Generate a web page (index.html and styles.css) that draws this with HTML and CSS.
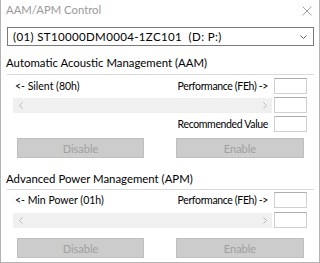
FILE: index.html
```html
<!DOCTYPE html>
<html lang="en">
<head>
    <meta charset="UTF-8">
    <meta name="viewport" content="width=device-width, initial-scale=1.0">
    <title>AAM/APM Control</title>
    <link rel="stylesheet" href="styles.css">
</head>
<body>
    <div class="window">
        <div class="titlebar">
            <span class="title">AAM/APM Control</span>
            <svg class="close" width="10" height="10" viewBox="0 0 10 10">
                <path d="M0.5 0.5 L9.5 9.5 M9.5 0.5 L0.5 9.5" stroke="#a0a0a0" stroke-width="1" fill="none"/>
            </svg>
        </div>

        <div class="combo">
            <span class="combo-text">(01) ST10000DM0004-1ZC101&nbsp;&nbsp;(D: P:)</span>
            <svg class="chevron" width="7" height="4" viewBox="0 0 7 4">
                <path d="M0.5 0.5 L3.5 3.5 L6.5 0.5" stroke="#606060" stroke-width="1" fill="none"/>
            </svg>
        </div>

        <!-- AAM -->
        <div class="group group-aam">
            <div class="group-title">Automatic Acoustic Management (AAM)</div>
            <div class="sep"></div>
            <div class="row">
                <span class="label-left">&lt;- Silent (80h)</span>
                <span class="label-right">Performance (FEh) -&gt;</span>
                <span class="field"></span>
            </div>
            <div class="row">
                <div class="scrollbar">
                    <svg width="4" height="7" viewBox="0 0 4 7"><path d="M3.5 0.5 L0.5 3.5 L3.5 6.5" stroke="#b8b8b8" fill="none"/></svg>
                    <svg width="4" height="7" viewBox="0 0 4 7"><path d="M0.5 0.5 L3.5 3.5 L0.5 6.5" stroke="#b8b8b8" fill="none"/></svg>
                </div>
                <span class="field"></span>
            </div>
            <div class="row">
                <span class="label-right">Recommended Value</span>
                <span class="field"></span>
            </div>
            <div class="buttons">
                <button class="btn" disabled>Disable</button>
                <button class="btn btn-wide" disabled>Enable</button>
            </div>
        </div>

        <!-- APM -->
        <div class="group group-apm">
            <div class="group-title">Advanced Power Management (APM)</div>
            <div class="sep"></div>
            <div class="row">
                <span class="label-left">&lt;- Min Power (01h)</span>
                <span class="label-right">Performance (FEh) -&gt;</span>
                <span class="field"></span>
            </div>
            <div class="row">
                <div class="scrollbar">
                    <svg width="4" height="7" viewBox="0 0 4 7"><path d="M3.5 0.5 L0.5 3.5 L3.5 6.5" stroke="#b8b8b8" fill="none"/></svg>
                    <svg width="4" height="7" viewBox="0 0 4 7"><path d="M0.5 0.5 L3.5 3.5 L0.5 6.5" stroke="#b8b8b8" fill="none"/></svg>
                </div>
                <span class="field"></span>
            </div>
            <div class="buttons">
                <button class="btn" disabled>Disable</button>
                <button class="btn btn-wide" disabled>Enable</button>
            </div>
        </div>
    </div>
</body>
</html>
```

FILE: styles.css
```css
body {
    margin: 0;
    padding: 0;
    background: #ffffff;
    font-family: Lato, 'Liberation Sans', sans-serif;
    font-size: 11px;
    color: #000000;
}

.window {
    width: 320px;
    height: 263px;
    box-sizing: border-box;
    border: 1px solid #b4b4b4;
    border-top: none;
    background: #ffffff;
    overflow: hidden;
}

.titlebar {
    display: flex;
    justify-content: space-between;
    height: 27px;
    padding-left: 5px;
}

.title {
    line-height: 20px;
    font-size: 11.3px;
    color: #9a9a9a;
}

.close {
    margin-top: 6px;
    margin-right: 7px;
}

.combo {
    display: flex;
    align-items: center;
    justify-content: space-between;
    height: 19px;
    box-sizing: border-box;
    margin: 0 5px 0 6px;
    padding: 0 5px 0 5px;
    border: 1px solid #7a7a7a;
}

.combo-text {
    line-height: 17px;
    font-size: 11.5px;
    letter-spacing: 0.35px;
}

.chevron {
    margin-top: 1px;
    margin-right: 1px;
}

.group-title {
    line-height: 14px;
    padding-left: 5px;
    font-size: 11.4px;
}

.group-aam .group-title {
    margin-top: 10px;
}

.group-apm .group-title {
    margin-top: 14px;
}

.sep {
    height: 1px;
    margin: 4px 5px 0 6px;
    background: #dadada;
}

.group-apm .sep {
    margin-top: 3px;
}

.row {
    display: flex;
    align-items: center;
    height: 16px;
    margin-top: 3px;
    padding: 0 12px 0 12px;
}

.group-apm .row {
    margin-top: 2px;
}

.group-apm .row + .row {
    margin-top: 4px;
}

.label-left {
    padding-left: 2px;
    font-size: 10.5px;
}

.label-right {
    margin-left: auto;
    margin-right: 6px;
    font-size: 10.5px;
    letter-spacing: -0.35px;
}

.field {
    width: 33px;
    height: 16px;
    box-sizing: border-box;
    border: 1px solid #d0d0d0;
    border-top-color: #adadad;
    background: #ffffff;
}

.scrollbar {
    flex: 1;
    display: flex;
    align-items: center;
    justify-content: space-between;
    height: 15px;
    margin-top: 1px;
    margin-right: 2px;
    padding: 0 5px 0 6px;
    background: #f0f0f0;
}

.buttons {
    display: flex;
    justify-content: space-between;
    margin-top: 6px;
    padding: 0 15px 0 16px;
}

.group-apm .buttons {
    margin-top: 10px;
}

.btn {
    width: 127px;
    height: 20px;
    box-sizing: border-box;
    border: 1px solid #bfbfbf;
    background: #cccccc;
    color: #a0a0a0;
    font-family: inherit;
    font-size: 11px;
    padding: 0;
}

.btn-wide {
    width: 128px;
}
```
